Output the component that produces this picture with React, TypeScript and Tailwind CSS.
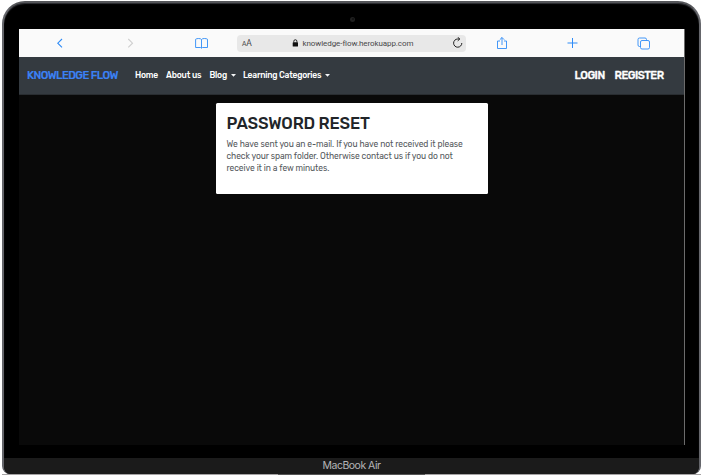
import React from "react";

function Caret() {
  return (
    <svg className="block h-[3px] w-[5px] shrink-0" viewBox="0 0 5 3">
      <path d="M0 0h5L2.500 2.800z" fill="#f4f5f6" />
    </svg>
  );
}

function BrowserBar() {
  return (
    <div className="flex h-7 shrink-0 items-center bg-[#fafafa]">
      <svg className="ml-[37px] block h-3 w-2" viewBox="0 0 8 12" fill="none" stroke="#2f8cf7" strokeWidth="1.1">
        <path d="M6 2L1.800 6.200 6 10.400" />
      </svg>
      <svg className="ml-[62px] block h-3 w-2" viewBox="0 0 8 12" fill="none" stroke="#cfcfcf" strokeWidth="1.1">
        <path d="M2.300 2L6.500 6.200l-4.200 4.200" />
      </svg>
      <svg className="ml-[61px] block h-3 w-[14px]" viewBox="0 0 14 12" fill="none" stroke="#2f8cf7" strokeWidth="0.9">
        <path d="M6.500 2.500C6 1.200 1.500 1.200.6 2.300V10.500H5.500L6.500 11.200l1-.7h5V2.300C11.500 1.200 7 1.200 6.500 2.500V11" />
      </svg>
      <div className="ml-[28px] flex h-[17px] w-[229px] items-center rounded-[4px] bg-[#e8e8e8] text-[#48484a]">
        <span className="ml-[5px] flex w-[12px] items-baseline pt-px leading-none">
          <span className="text-[6.500px]">A</span>
          <span className="font-['Roboto'] text-[8.500px]">A</span>
        </span>
        <svg className="ml-[38px] block h-2 w-[7px] shrink-0" viewBox="0 0 7 8">
          <rect x="0.700" y="3.300" width="5.300" height="4.200" rx="0.600" fill="#111" />
          <path d="M1.800 3.500V2.300a1.550 1.550 0 0 1 3.100 0V3.500" fill="none" stroke="#111" strokeWidth="0.900" />
        </svg>
        <span className="ml-[3.500px] w-[112px] shrink-0 whitespace-nowrap pt-px font-['Roboto'] text-[8px] leading-none tracking-[-0.080px]">
          knowledge-flow.herokuapp.com
        </span>
        <svg className="ml-[37.500px] block h-3 w-[11px]" viewBox="0 0 11 12" fill="none" stroke="#222" strokeWidth="1">
          <path d="M9.800 6a4.100 4.100 0 1 1-4.100-4H7.700M5.700.200L7.800 2 5.700 3.900" />
        </svg>
      </div>
      <svg className="ml-[30px] block h-[14px] w-3" viewBox="0 0 12 14" fill="none" stroke="#2f8cf7" strokeWidth="0.900">
        <path d="M4 5H1.500v7.500h9V5H8M6 9V1.500M3.800 3.700L6 1.500l2.200 2.200" />
      </svg>
      <svg className="ml-[59px] block h-[10px] w-[11px]" viewBox="0 0 11 10" fill="none" stroke="#2f8cf7" strokeWidth="1">
        <path d="M5.500 0v10M.5 5h10" />
      </svg>
      <svg className="ml-[59px] block h-[13px] w-[13px]" viewBox="0 0 13 13" fill="none" stroke="#2f8cf7" strokeWidth="0.900">
        <rect x="3.500" y="3.500" width="9" height="8.500" rx="1.500" />
        <path d="M3.500 9.500H2.500A1.500 1.500 0 0 1 1 8V2.500A1.500 1.500 0 0 1 2.500 1h5.500A1.500 1.500 0 0 1 9.500 2.500v1" />
      </svg>
    </div>
  );
}

function Navbar() {
  return (
    <nav className="flex h-[38px] shrink-0 items-center whitespace-nowrap border-b border-[#292d31] bg-[#343a40] text-[8.500px] font-medium leading-none tracking-[-0.240px] text-white">
      <span className="ml-2 w-[108px] text-[11px] tracking-[-0.550px] text-[#3b82f6] [-webkit-text-stroke:0.150px_#3b82f6]">KNOWLEDGE FLOW</span>
      <span className="w-[31px]">Home</span>
      <span className="w-[43.500px] tracking-[-0.180px]">About us</span>
      <span className="w-[21px]">Blog</span>
      <Caret />
      <span className="ml-[7.500px] w-[82px]">Learning Categories</span>
      <Caret />
      <span className="ml-auto w-[40px] text-[11px] tracking-[-0.500px] [-webkit-text-stroke:0.300px_white]">LOGIN</span>
      <span className="mr-[19.500px] w-[50px] text-[11px] tracking-[-0.500px] [-webkit-text-stroke:0.300px_white]">REGISTER</span>
    </nav>
  );
}

export default function App() {
  return (
    <div className="h-[475px] w-[703px] overflow-hidden bg-white font-['Rubik','Roboto',sans-serif]">
      <div className="flex h-[475px] flex-col px-[2px] pt-px">
        <div className="flex h-[473px] flex-col overflow-hidden rounded-b-[8px] rounded-t-[23px] border-x-2 border-t-2 border-x-[#65666b] border-t-[#55565a] bg-black shadow-[inset_0_1px_1px_#303136]">
          <div className="flex h-[26px] shrink-0 items-center justify-center pl-[2px] pt-[6px]">
            <div className="flex h-[5px] w-[5px] items-center justify-center rounded-full bg-[#202020]">
              <div className="h-[2px] w-[2px] rounded-full bg-[#101010]" />
            </div>
          </div>
          <div className="ml-[15px] flex h-[416px] w-[666px] shrink-0 flex-col border-r border-[#6b6b6b] bg-[#090909]">
            <BrowserBar />
            <Navbar />
            <main className="ml-[197px] mt-2 h-[91px] w-[272px] rounded-[1.500px] bg-white px-[10.500px] pt-[11px]">
              <h1 className="whitespace-nowrap text-[16.500px] font-medium leading-[19px] tracking-[-0.180px] text-[#212529]">PASSWORD RESET</h1>
              <p className="mt-[5px] whitespace-nowrap text-[8.500px] leading-[12px] tracking-[-0.085px] text-[#55595d]">
                We have sent you an e-mail. If you have not received it please
                <br />
                check your spam folder. Otherwise contact us if you do not
                <br />
                receive it in a few minutes.
              </p>
            </main>
          </div>
          <footer className="mt-[13px] flex h-4 shrink-0 items-center justify-center bg-[#1b1b1b] pt-px font-['Inter',sans-serif] text-[10.500px] leading-none tracking-[-0.500px] text-[#b5b5b8]">
            MacBook Air
          </footer>
        </div>
        <div className="flex h-px justify-center bg-[#a5a3a4]">
          <div className="h-px w-[147px] bg-[#555]" />
        </div>
      </div>
    </div>
  );
}
